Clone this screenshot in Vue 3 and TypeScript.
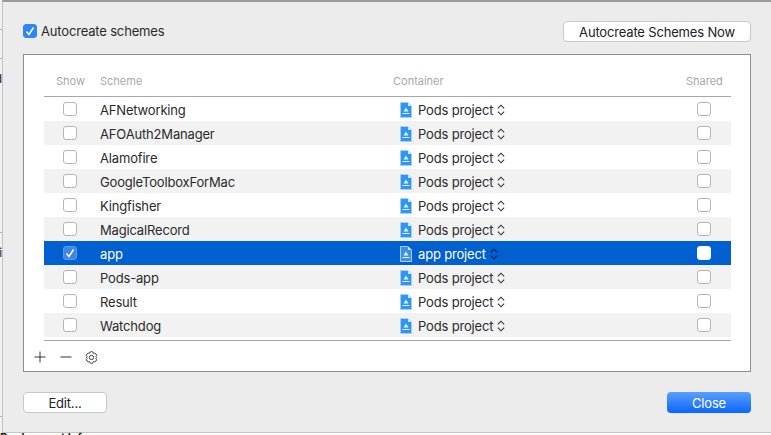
<script setup lang="ts">
interface Scheme {
  name: string
  container: string
  show?: boolean
}

const schemes: Scheme[] = [
  { name: 'AFNetworking', container: 'Pods project' },
  { name: 'AFOAuth2Manager', container: 'Pods project' },
  { name: 'Alamofire', container: 'Pods project' },
  { name: 'GoogleToolboxForMac', container: 'Pods project' },
  { name: 'Kingfisher', container: 'Pods project' },
  { name: 'MagicalRecord', container: 'Pods project' },
  { name: 'app', container: 'app project', show: true },
  { name: 'Pods-app', container: 'Pods project' },
  { name: 'Result', container: 'Pods project' },
  { name: 'Watchdog', container: 'Pods project' },
]

// bits of the window behind the sheet that stick out on the left
const scraps = [
  { gap: 29, text: '' },
  { gap: 28, text: '' },
  { gap: 14, text: 'd' },
  { gap: 147, text: '' },
  { gap: 14, text: 'i' },
  { gap: 157, text: '' },
]
</script>

<template>
  <div class="page">
    <div class="window">
      <div class="gutter">
        <div
          v-for="(g, i) in scraps"
          :key="i"
          :class="g.text ? 'frag' : 'hr'"
          :style="{ marginTop: g.gap + 'px' }"
        >
          <span v-if="g.text">{{ g.text }}</span>
        </div>
      </div>
      <div class="sheet">
        <div class="top-row">
          <label class="auto">
            <span class="check on">
              <svg viewBox="0 0 14 14" width="14" height="14"><path d="M3.5 7.5 L6 10.5 L10.5 3.5" fill="none" stroke="#fff" stroke-width="1.5" /></svg>
            </span>
            Autocreate schemes
          </label>
          <button class="btn now">Autocreate Schemes Now</button>
        </div>

        <div class="panel">
          <div class="table">
            <div class="row head">
              <span class="c-show">Show</span>
              <span class="c-name">Scheme</span>
              <span class="c-cont">Container</span>
              <span class="c-shared">Shared</span>
            </div>
            <div
              v-for="(s, i) in schemes"
              :key="s.name"
              class="row item"
              :class="{ odd: i % 2 === 1, sel: s.show }"
            >
              <span class="c-show">
                <span class="check">
                  <svg v-if="s.show" viewBox="0 0 14 14" width="14" height="14"><path d="M3.5 7.5 L6 10.5 L10.5 3.5" fill="none" stroke="#fff" stroke-width="1.5" /></svg>
                </span>
              </span>
              <span class="c-name">{{ s.name }}</span>
              <span class="c-cont">
                <svg class="file" viewBox="0 0 12 16" width="12" height="16">
                  <path d="M0.5 0.5 H8 L11.5 4 V15.5 H0.5 Z" :fill="s.show ? '#3f8fe8' : '#2b96f5'" stroke="#a9cfef" stroke-width="1" />
                  <path d="M8 0.5 V4 H11.5 Z" fill="#d4e9fb" />
                  <path d="M6 5.5 L8.5 9.5 H3.5 Z M2.5 11 H9.5 V12 H2.5 Z" fill="#e4f2fe" />
                </svg>
                <span class="cont-text">{{ s.container }}</span>
                <svg class="updown" viewBox="0 0 8 12" width="8" height="12">
                  <path d="M0.8 4.4 L4 1.2 L7.2 4.4 M0.8 7.6 L4 10.8 L7.2 7.6" fill="none" :stroke="s.show ? '#08224d' : '#333'" stroke-width="1.1" />
                </svg>
              </span>
              <span class="c-shared"><span class="check"></span></span>
            </div>
          </div>
          <div class="tools">
            <svg viewBox="0 0 12 12" width="12" height="12"><path d="M6 0.5 V11.5 M0.5 6 H11.5" stroke="#333" stroke-width="1" fill="none" /></svg>
            <svg viewBox="0 0 12 12" width="12" height="12"><path d="M0.5 6 H11.5" stroke="#333" stroke-width="1" fill="none" /></svg>
            <svg class="gear" viewBox="0 0 14 14" width="13" height="13">
              <path d="M5.6 1 Q7 0.2 8.4 1 L9 2.5 L10.6 2.3 Q12 3 12.6 4.6 L11.7 5.8 L12.4 7 L11.7 8.2 L12.6 9.4 Q12 11 10.6 11.7 L9 11.5 L8.4 13 Q7 13.8 5.6 13 L5 11.5 L3.4 11.7 Q2 11 1.4 9.4 L2.3 8.2 L1.6 7 L2.3 5.8 L1.4 4.6 Q2 3 3.4 2.3 L5 2.5 Z" fill="none" stroke="#333" stroke-width="1" stroke-linejoin="round" />
              <circle cx="7" cy="7" r="2.3" fill="none" stroke="#333" stroke-width="1" />
            </svg>
          </div>
        </div>

        <div class="bottom-row">
          <button class="btn wide">Edit...</button>
          <button class="btn wide primary">Close</button>
        </div>
      </div>
    </div>
    <div class="behind">Deployment Info</div>
  </div>
</template>

<style scoped>
.page {
  width: 771px;
  height: 435px;
  overflow: hidden;
  background: #fff;
  font-family: Inter, "Liberation Sans", sans-serif;
  font-size: 13px;
  letter-spacing: -0.17px;
  color: #2a2a2a;
}

.window {
  display: flex;
  height: 433px;
}

.gutter {
  flex: none;
  width: 2px;
  background: #f1f1f1;
  display: flex;
  flex-direction: column;
}

.hr {
  height: 1px;
  background: #b4b4b4;
}

.frag {
  display: flex;
  justify-content: flex-end;
  width: 2px;
  height: 12px;
  overflow: hidden;
  line-height: 12px;
  font-size: 12px;
  color: #222;
}

.frag span {
  flex: none;
}

.sheet {
  box-sizing: border-box;
  flex: 1;
  background: #ececec;
  border-top: 2px solid #9a9a9a;
  border-left: 1px solid #c4c4c4;
  border-bottom: 1px solid #c4c4c4;
  padding: 0 20px;
}

.top-row {
  display: flex;
  justify-content: space-between;
  align-items: center;
  height: 21px;
  padding-top: 19px;
}

.auto {
  display: flex;
  align-items: center;
  gap: 4px;
  margin-bottom: 2px;
}

.check {
  box-sizing: border-box;
  display: inline-block;
  width: 14px;
  height: 14px;
  border-radius: 3px;
  border: 1px solid #b5b5b5;
  background: #fff;
}

.check svg {
  display: block;
  margin: -1px;
}

.check.on {
  background: #2f86f7;
  border-color: #2f86f7;
}

.btn {
  box-sizing: border-box;
  height: 21px;
  border: 1px solid #c8c8c8;
  border-radius: 4px;
  background: #fff;
  font: inherit;
  letter-spacing: inherit;
  color: #222;
  padding: 0;
}

.now {
  width: 188px;
}

.panel {
  box-sizing: border-box;
  height: 318px;
  margin-top: 12px;
  border: 1px solid #8e8e8e;
  background: #fff;
  padding: 18px 19px 0 20px;
}

.table {
  border-bottom: 1px solid #a8a8a8;
  padding-bottom: 3px;
}

.row {
  display: grid;
  grid-template-columns: 56px 293px 1fr 45px;
  align-items: center;
}

.head {
  box-sizing: border-box;
  height: 24px;
  padding-bottom: 7px;
  font-size: 11px;
  letter-spacing: 0;
  color: #a8a8a8;
  border-bottom: 1px solid #a8a8a8;
}

.head .c-show {
  padding-left: 12px;
}

.item {
  height: 24px;
}

.item .c-show {
  padding-left: 19px;
  display: flex;
}

.item .c-name {
  padding-top: 1px;
}

.item .c-cont {
  padding: 1px 0 0 7px;
}

.item.odd {
  background: #f2f2f2;
}

.item.sel {
  background: #0060d0;
  color: #fff;
}

.item.sel .check {
  background: #fff;
  border-color: #fff;
}

.item.sel .c-show .check {
  background: #3f86e6;
  border-color: #5c99ea;
}

.c-cont {
  display: flex;
  align-items: center;
  gap: 6px;
}

.cont-text {
  margin-right: -2px;
}

.c-shared {
  display: flex;
}

.item .c-shared {
  padding-left: 11px;
}

.tools {
  box-sizing: border-box;
  display: flex;
  align-items: center;
  gap: 14px;
  padding-top: 2px;
  margin-left: -10px;
  height: 30px;
}

.gear {
  margin-left: -1px;
}

.bottom-row {
  display: flex;
  justify-content: space-between;
  margin-top: 20px;
}

.wide {
  width: 84px;
}

.primary {
  border: none;
  background: linear-gradient(#5b9ffb, #0a66ff);
  color: #fff;
}

.behind {
  margin-top: -3px;
  font-size: 11px;
  font-weight: 700;
  letter-spacing: 0;
  color: #222;
  white-space: nowrap;
}
</style>
